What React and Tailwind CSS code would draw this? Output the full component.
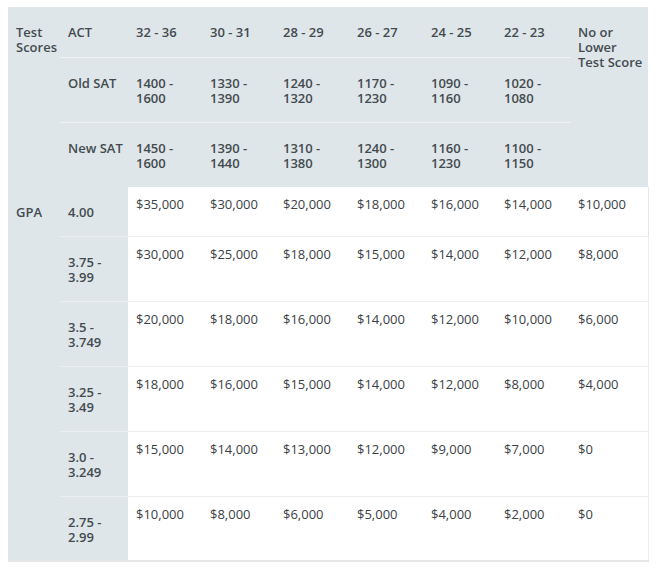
const ranges = [
  { label: 'Old SAT', values: [['1400 -', '1600'], ['1330 -', '1390'], ['1240 -', '1320'], ['1170 -', '1230'], ['1090 -', '1160'], ['1020 -', '1080']] },
  { label: 'New SAT', values: [['1450 -', '1600'], ['1390 -', '1440'], ['1310 -', '1380'], ['1240 -', '1300'], ['1160 -', '1230'], ['1100 -', '1150']] },
]

const act = ['32 - 36', '30 - 31', '28 - 29', '26 - 27', '24 - 25', '22 - 23']

const rows = [
  { gpa: ['4.00'], h: 'h-[49px]', awards: ['$35,000', '$30,000', '$20,000', '$18,000', '$16,000', '$14,000', '$10,000'] },
  { gpa: ['3.75 -', '3.99'], h: 'h-[65px]', awards: ['$30,000', '$25,000', '$18,000', '$15,000', '$14,000', '$12,000', '$8,000'] },
  { gpa: ['3.5 -', '3.749'], h: 'h-[65px]', awards: ['$20,000', '$18,000', '$16,000', '$14,000', '$12,000', '$10,000', '$6,000'] },
  { gpa: ['3.25 -', '3.49'], h: 'h-[65px]', awards: ['$18,000', '$16,000', '$15,000', '$14,000', '$12,000', '$8,000', '$4,000'] },
  { gpa: ['3.0 -', '3.249'], h: 'h-[65px]', awards: ['$15,000', '$14,000', '$13,000', '$12,000', '$9,000', '$7,000', '$0'] },
  { gpa: ['2.75 -', '2.99'], h: 'h-[65px]', awards: ['$10,000', '$8,000', '$6,000', '$5,000', '$4,000', '$2,000', '$0'] },
]

function Lines({ lines }) {
  return lines.map((l, i) => (
    <span key={i} className="block whitespace-nowrap">
      {l}
    </span>
  ))
}

export default function App() {
  return (
    <div className="bg-white pl-2 pt-[7px] text-[13px] leading-[15px] text-[#3a4246]" style={{ fontFamily: '"Open Sans", "Liberation Sans", sans-serif' }}>
      <table className="w-[640px] table-fixed border-collapse border-b-2 border-[#e4e6e7]">
        <colgroup>
          <col className="w-[52px]" />
          <col className="w-[68px]" />
          <col className="w-[74px]" />
          <col className="w-[74px]" />
          <col className="w-[74px]" />
          <col className="w-[74px]" />
          <col className="w-[73px]" />
          <col className="w-[74px]" />
          <col className="w-[77px]" />
        </colgroup>
        <thead className="bg-[#dfe6e9] font-semibold text-[#434b50]">
          <tr className="h-[50px]">
            <th rowSpan={3} className="pl-2 pt-[18px] text-left align-top font-semibold">
              <Lines lines={['Test', 'Scores']} />
            </th>
            <th className="pl-2 pt-[18px] text-left align-top font-semibold">ACT</th>
            {act.map((a, i) => (
              <th key={a} className={`${i > 1 ? 'pl-[7px]' : 'pl-2'} pt-[18px] text-left align-top font-semibold whitespace-nowrap`}>
                {a}
              </th>
            ))}
            <th rowSpan={3} className="pl-[7px] pt-[18px] text-left align-top font-semibold">
              <Lines lines={['No or', 'Lower', 'Test Score']} />
            </th>
          </tr>
          {ranges.map((r) => (
            <tr key={r.label} className="h-[65px]">
              <th className="border-t border-[#eef2f3] pl-2 pt-[18px] text-left align-top font-semibold whitespace-nowrap">{r.label}</th>
              {r.values.map((v, i) => (
                <td key={i} className={`border-t border-[#eef2f3] ${i > 1 ? 'pl-[7px]' : 'pl-2'} pt-[18px] align-top font-semibold`}>
                  <Lines lines={v} />
                </td>
              ))}
            </tr>
          ))}
        </thead>
        <tbody>
          {rows.map((row, ri) => (
            <tr key={ri} className={row.h}>
              {ri === 0 && (
                <th rowSpan={6} className="bg-[#dfe6e9] pl-2 pt-[18px] text-left align-top font-semibold text-[#434b50]">
                  GPA
                </th>
              )}
              <th className={`bg-[#dfe6e9] pl-2 pt-[18px] text-left align-top font-semibold text-[#434b50] ${ri > 0 ? 'border-t border-[#eceff0]' : ''}`}>
                <Lines lines={row.gpa} />
              </th>
              {row.awards.map((a, i) => (
                <td
                  key={i}
                  className={`${i > 1 ? 'pl-[7px]' : 'pl-2'} pt-[10px] align-top whitespace-nowrap ${ri > 0 ? 'border-t border-[#eceff0]' : ''} ${i === 6 ? 'border-r border-[#e4e6e7]' : ''}`}
                >
                  {a}
                </td>
              ))}
            </tr>
          ))}
        </tbody>
      </table>
    </div>
  )
}
